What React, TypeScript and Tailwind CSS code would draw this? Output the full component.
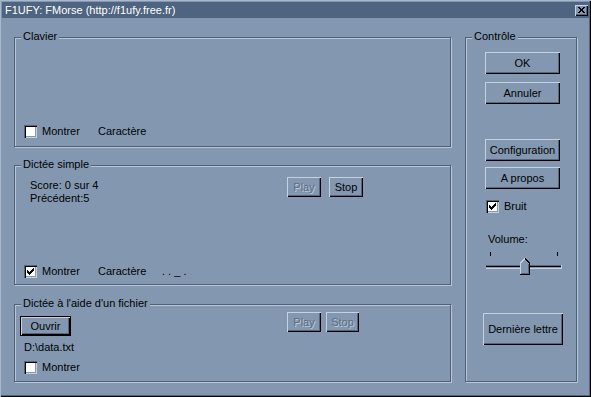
import type { ReactNode } from "react";

const FONT = "font-['Liberation_Sans',Arial,sans-serif] text-[11px] leading-[13px]";

function Btn({
  children,
  className = "",
  disabled = false,
  isDefault = false,
}: {
  children: ReactNode;
  className?: string;
  disabled?: boolean;
  isDefault?: boolean;
}) {
  return (
    <div
      className={`flex items-center justify-center bg-[#8398b0] ${
        isDefault
          ? "border border-black shadow-[inset_1px_1px_0_#c4d2e0,inset_-1px_-1px_0_#000,inset_-2px_-2px_0_#56667c]"
          : "shadow-[inset_1px_1px_0_#c4d2e0,inset_-1px_-1px_0_#000,inset_-2px_-2px_0_#56667c]"
      } ${
        disabled
          ? "text-[#5b6c83] [text-shadow:1px_1px_0_#bccbdc]"
          : "text-black"
      } ${className}`}
    >
      {children}
    </div>
  );
}

function CheckBox({ checked = false }: { checked?: boolean }) {
  return (
    <div className="w-[13px] h-[13px] shrink-0 bg-white shadow-[inset_1px_1px_0_#56667c,inset_2px_2px_0_#000,inset_-1px_-1px_0_#c4d2e0,inset_-2px_-2px_0_#8398b0] flex items-center justify-center">
      {checked && (
        <svg width="7" height="7" viewBox="0 0 7 7" shapeRendering="crispEdges">
          <path
            d="M0 2h1v1h1v1h1v-1h1v-1h1v-1h1v-1h1v3h-1v1h-1v1h-1v1h-1v1h-1v-1h-1v-1h-1v-1h-1z"
            fill="#000"
          />
        </svg>
      )}
    </div>
  );
}

function Group({
  label,
  className = "",
  children,
}: {
  label: string;
  className?: string;
  children?: ReactNode;
}) {
  return (
    <div
      className={`relative border border-[#4f6077] shadow-[inset_1px_1px_0_#b6c6d8,1px_1px_0_#b6c6d8] ${className}`}
    >
      <span className="absolute left-[6px] top-[-8px] bg-[#8398b0] px-[2px] text-black">
        {label}
      </span>
      {children}
    </div>
  );
}

function VolumeSlider() {
  return (
    <svg width="80" height="26" viewBox="0 0 80 26" shapeRendering="crispEdges">
      <rect x="6" y="2" width="1" height="4" fill="#000" />
      <rect x="73" y="2" width="1" height="4" fill="#000" />
      <rect x="2" y="15" width="76" height="1" fill="#56667c" />
      <rect x="2" y="16" width="76" height="1" fill="#000" />
      <rect x="2" y="17" width="76" height="1" fill="#8398b0" />
      <rect x="2" y="18" width="76" height="1" fill="#c4d2e0" />
      <rect x="77" y="15" width="1" height="4" fill="#c4d2e0" />
      <path d="M36 24V13L41 8L46 13V24Z" fill="#8398b0" />
      <path d="M36.5 23.5V13.2L41 8.7" stroke="#c4d2e0" fill="none" />
      <path d="M41 8.7L45.5 13.2V24.5H36" stroke="#000" fill="none" />
      <path d="M44.5 14V23.5H37" stroke="#56667c" fill="none" />
    </svg>
  );
}

export default function App() {
  return (
    <div
      className={`${FONT} w-[591px] h-[397px] bg-[#8398b0] p-[2px] flex flex-col shadow-[inset_1px_1px_0_#a9b9cb,inset_-1px_-1px_0_#000,inset_-2px_-2px_0_#56667c] overflow-hidden`}
    >
      {/* title bar */}
      <div className="h-[16px] bg-[#4e6480] flex items-center justify-between pl-[3px] pr-[1px]">
        <span className="text-white leading-[16px]">
          F1UFY: FMorse (http://f1ufy.free.fr)
        </span>
        <div className="w-[13px] h-[11px] bg-[#8398b0] shadow-[inset_1px_1px_0_#c4d2e0,inset_-1px_-1px_0_#000,inset_-2px_-2px_0_#56667c] flex items-center justify-center">
          <svg width="7" height="6" viewBox="0 0 7 6" shapeRendering="crispEdges">
            <path
              d="M0 0h2v1h1v1h1v-1h1v-1h2v1h-1v1h-1v2h1v1h1v1h-2v-1h-1v-1h-1v1h-1v1h-2v-1h1v-1h1v-2h-1v-1h-1z"
              fill="#000"
            />
          </svg>
        </div>
      </div>

      <div className="flex pl-[12px] pt-[19px]">
        {/* left column */}
        <div className="flex flex-col w-[437px]">
          <Group label="Clavier" className="h-[110px] pl-[9px] pt-[87px]">
            <div className="flex items-center">
              <CheckBox />
              <span className="ml-[5px] w-[56px]">Montrer</span>
              <span>Caractère</span>
            </div>
          </Group>

          <Group label="Dictée simple" className="h-[120px] mt-[18px] flex flex-col">
            <div className="flex pl-[15px] pt-[11px]">
              <div className="w-[257px] mt-[2px]">
                <div>Score: 0 sur 4</div>
                <div>Précédent:5</div>
              </div>
              <Btn disabled className="w-[34px] h-[20px]">
                Play
              </Btn>
              <Btn className="w-[34px] h-[20px] ml-[8px]">Stop</Btn>
            </div>
            <div className="flex items-center pl-[9px] mt-[60px]">
              <CheckBox checked />
              <span className="ml-[5px] w-[56px]">Montrer</span>
              <span className="w-[64px]">Caractère</span>
              <span className="whitespace-pre">. . _ .</span>
            </div>
          </Group>

          <Group label="Dictée à l'aide d'un fichier" className="h-[78px] mt-[19px] flex flex-col">
            <div className="flex items-start pt-[7px]">
              <Btn isDefault className="w-[51px] h-[20px] ml-[5px] mt-[4px]">
                Ouvrir
              </Btn>
              <Btn disabled className="w-[34px] h-[20px] ml-[216px]">
                Play
              </Btn>
              <Btn disabled className="w-[33px] h-[20px] ml-[5px]">
                Stop
              </Btn>
            </div>
            <div className="pl-[9px] mt-[5px]">D:\data.txt</div>
            <div className="flex items-center pl-[9px] mt-[7px]">
              <CheckBox />
              <span className="ml-[5px]">Montrer</span>
            </div>
          </Group>
        </div>

        {/* right column */}
        <Group label="Contrôle" className="w-[112px] h-[345px] ml-[14px] flex flex-col items-start">
          <Btn className="w-[75px] h-[22px] ml-[19px] mt-[14px]">OK</Btn>
          <Btn className="w-[75px] h-[22px] ml-[19px] mt-[8px]">Annuler</Btn>
          <Btn className="w-[75px] h-[22px] ml-[19px] mt-[35px]">Configuration</Btn>
          <Btn className="w-[75px] h-[22px] ml-[19px] mt-[6px]">A propos</Btn>
          <div className="flex items-center ml-[20px] mt-[11px]">
            <CheckBox checked />
            <span className="ml-[5px]">Bruit</span>
          </div>
          <div className="ml-[22px] mt-[20px]">Volume:</div>
          <div className="ml-[18px] mt-[4px]">
            <VolumeSlider />
          </div>
          <Btn className="w-[80px] h-[32px] ml-[17px] mt-[37px]">Dernière lettre</Btn>
        </Group>
      </div>
    </div>
  );
}
